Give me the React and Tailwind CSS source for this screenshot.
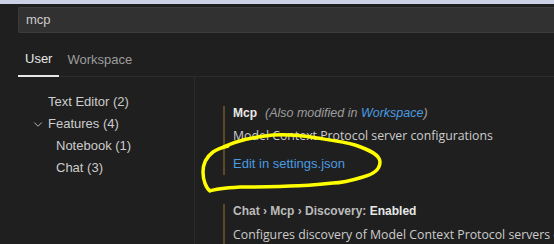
const treeItems = [
  { label: "Text Editor (2)", indent: "pl-[48px]" },
  { label: "Features (4)", indent: "pl-[48px]", open: true },
  { label: "Notebook (1)", indent: "pl-[56px]" },
  { label: "Chat (3)", indent: "pl-[56px]" },
];

const Chevron = () => (
  <svg width="12" height="12" viewBox="0 0 16 16" className="absolute left-[32px] top-[5px]">
    <path d="M3 6l5 5 5-5" fill="none" stroke="#c5c5c5" strokeWidth="1.2" />
  </svg>
);

const Scribble = () => (
  <svg width="554" height="244" className="absolute left-0 top-0 pointer-events-none">
    <path
      d="M223 147 C232 143 250 137 273 135 C290 134 305 136 317 138 C330 140 345 142 355 145 C370 150 380 155 380 162 C380 170 372 175 363 177 C350 181 340 183 333 183 C315 185 300 186 290 186 C270 187 255 187 240 187 C225 188 215 189 210 191 C206 188 203 180 203 172 C203 165 205 158 213 152 C216 150 220 148 228 146"
      fill="none"
      stroke="#ffff00"
      strokeWidth="3.5"
      strokeLinecap="round"
      strokeLinejoin="round"
    />
  </svg>
);

const descFont = { fontFamily: '"Open Sans", "Liberation Sans", sans-serif' };

export default function App() {
  return (
    <div
      className="relative w-[554px] h-[244px] overflow-hidden bg-[#1f1f1f] text-[13px] text-[#cccccc]"
      style={{ fontFamily: '"Liberation Sans", Arial, sans-serif' }}
    >
      <div className="h-[4px] bg-[#cbd2e4]" />
      <div className="pl-[18px] pt-[3px]">
        <div className="h-[26px] bg-[#313131] border border-[#3c3c3c] border-r-0 rounded-l-[2px] flex items-center pl-[7px] text-[#cccccc]">
          mcp
        </div>
        <div className="flex items-end h-[44px] border-b border-[#2b2b2b]">
          <div className="px-[7px] pb-[7px] border-b-2 border-[#e7e7e7] -mb-px text-[#e7e7e7]">User</div>
          <div className="px-[8px] pb-[7px] text-[#9d9d9d]">Workspace</div>
        </div>
      </div>
      <div className="flex">
        <div className="w-[195px] h-[170px] pt-[14px] border-r border-[#2b2b2b] shrink-0">
          {treeItems.map((item) => (
            <div key={item.label} className={`relative h-[22px] leading-[22px] ${item.indent}`}>
              {item.open && <Chevron />}
              {item.label}
            </div>
          ))}
        </div>
        <div className="pl-[28px] pt-[29px] whitespace-nowrap">
          <div className="border-l-2 border-[#5b4a2a] pl-[8px] pb-[2px]">
            <div className="h-[14px] leading-[14px]">
              <span className="font-bold text-[12px] text-[#e7e7e7]">Mcp</span>
              <span className="italic text-[12.5px] text-[#9d9d9d] ml-[8px]">
                (Also modified in <span className="text-[#4a9be0]">Workspace</span>)
              </span>
            </div>
            <div className="mt-[7px] h-[18px] leading-[18px] text-[12.3px]" style={descFont}>
              Model Context Protocol server configurations
            </div>
            <div className="mt-[10px] h-[18px] leading-[18px] text-[#4a9be0]">Edit in settings.json</div>
          </div>
          <div className="mt-[29px] border-l-2 border-[#5b4a2a] pl-[8px]">
            <div className="h-[14px] leading-[14px] text-[12px] font-bold text-[#bbbbbb]">
              Chat › Mcp › Discovery: <span className="text-[#e7e7e7]">Enabled</span>
            </div>
            <div className="mt-[8px] h-[18px] leading-[18px] text-[12.3px]" style={descFont}>
              Configures discovery of Model Context Protocol servers on the machine.
            </div>
          </div>
        </div>
      </div>
      <Scribble />
    </div>
  );
}
